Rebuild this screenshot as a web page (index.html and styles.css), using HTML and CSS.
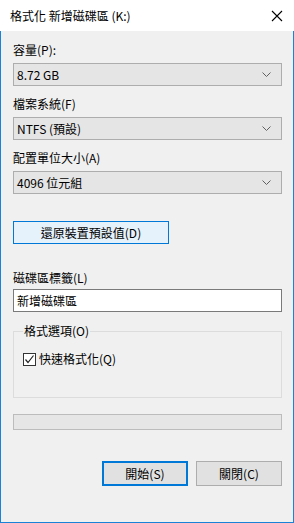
FILE: index.html
```html
<!DOCTYPE html>
<html lang="zh-Hant">
<head>
  <meta charset="utf-8">
  <title>格式化 新增磁碟區 (K:)</title>
  <link rel="stylesheet" href="styles.css">
</head>
<body>
  <div class="window">
    <div class="titlebar">
      <span class="title">格式化 新增磁碟區 (K:)</span>
      <svg class="close" width="12" height="12" viewBox="0 0 12 12">
        <path d="M1 1 L11 11 M11 1 L1 11" stroke="#000" stroke-width="1.1" fill="none"/>
      </svg>
    </div>

    <div class="content">
      <div class="label first">容量(P):</div>
      <div class="select">
        <span>8.72 GB</span>
        <svg class="chev" width="9" height="5" viewBox="0 0 9 5"><path d="M0.5 0.5 L4.5 4.5 L8.5 0.5" stroke="#606060" fill="none"/></svg>
      </div>

      <div class="label">檔案系統(F)</div>
      <div class="select">
        <span>NTFS (預設)</span>
        <svg class="chev" width="9" height="5" viewBox="0 0 9 5"><path d="M0.5 0.5 L4.5 4.5 L8.5 0.5" stroke="#606060" fill="none"/></svg>
      </div>

      <div class="label">配置單位大小(A)</div>
      <div class="select">
        <span>4096 位元組</span>
        <svg class="chev" width="9" height="5" viewBox="0 0 9 5"><path d="M0.5 0.5 L4.5 4.5 L8.5 0.5" stroke="#606060" fill="none"/></svg>
      </div>

      <div class="restore">還原裝置預設值(D)</div>

      <div class="label vol">磁碟區標籤(L)</div>
      <div class="textbox">新增磁碟區</div>

      <fieldset class="group">
        <legend>格式選項(O)</legend>
        <div class="check">
          <span class="box">
            <svg width="11" height="11" viewBox="0 0 11 11"><path d="M1.5 5.5 L4 8.5 L9.5 1.5" stroke="#222" stroke-width="1.2" fill="none"/></svg>
          </span>
          <span>快速格式化(Q)</span>
        </div>
      </fieldset>

      <div class="progress"></div>

      <div class="buttons">
        <div class="btn default">開始(S)</div>
        <div class="btn">關閉(C)</div>
      </div>
    </div>
  </div>
</body>
</html>
```

FILE: styles.css
```css
html, body {
  margin: 0;
  padding: 0;
}
body {
  font-family: "Noto Sans CJK TC", "Noto Sans", sans-serif;
  font-size: 12px;
  color: #000;
  background: #f0f0f0;
}
.window {
  width: 294px;
  height: 523px;
  display: flex;
  flex-direction: column;
}
.titlebar {
  height: 31px;
  background: #fff;
  display: flex;
  align-items: center;
  justify-content: space-between;
  padding: 0 11px 0 10px;
  flex-shrink: 0;
}
.title {
  line-height: 16px;
}
.close {
  display: block;
}
.content {
  flex: 1;
  border: 1px solid #1a83d8;
  border-top: none;
  padding: 0 11px 0 12px;
  display: flex;
  flex-direction: column;
}
.label {
  line-height: 16px;
  height: 16px;
  margin: 10px 0 5px 0;
}
.label.first {
  margin-top: 11px;
}
.select {
  height: 21px;
  border: 1px solid #adadad;
  background: #e5e5e5;
  display: flex;
  align-items: center;
  justify-content: space-between;
  padding: 0 10px 0 3px;
  line-height: 16px;
}
.chev {
  display: block;
}
.restore {
  width: 154px;
  height: 21px;
  margin-top: 27px;
  border: 1px solid #0078d7;
  background: #e5f1fb;
  display: flex;
  align-items: center;
  justify-content: center;
  line-height: 16px;
}
.label.vol {
  margin: 26px 0 3px 0;
}
.textbox {
  height: 21px;
  border: 1px solid #7a7a7a;
  background: #fff;
  padding: 0 3px;
  display: flex;
  align-items: center;
  line-height: 16px;
}
.group {
  margin: 11px 0 0 0;
  padding: 12px 9px 30px 9px;
  border: 1px solid #dcdcdc;
  min-width: 0;
}
.group legend {
  padding: 0 1px;
  line-height: 16px;
}
.check {
  display: flex;
  align-items: center;
  gap: 3px;
  line-height: 16px;
}
.box {
  width: 11px;
  height: 11px;
  border: 1px solid #333;
  background: #fff;
  display: flex;
}
.progress {
  height: 14px;
  margin-top: 16px;
  border: 1px solid #bcbcbc;
  background: #e6e6e6;
}
.buttons {
  margin-top: 31px;
  display: flex;
  justify-content: flex-end;
  gap: 8px;
}
.btn {
  width: 84px;
  height: 23px;
  border: 1px solid #adadad;
  background: #e1e1e1;
  display: flex;
  align-items: center;
  justify-content: center;
  line-height: 16px;
}
.btn.default {
  width: 82px;
  height: 21px;
  border: 2px solid #0078d7;
}
```
